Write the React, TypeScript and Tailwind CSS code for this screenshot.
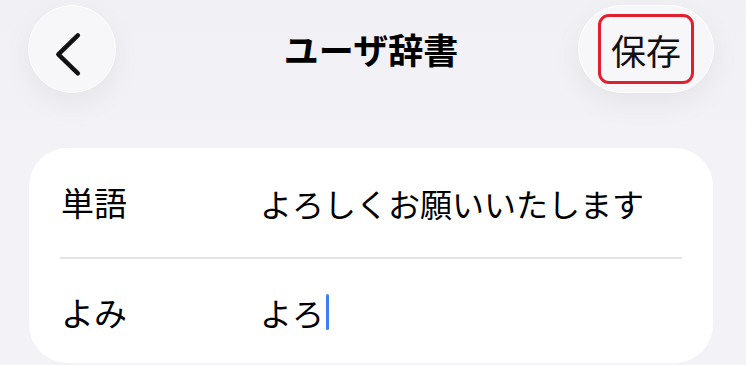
import React from "react";

export default function App() {
  const font = { fontFamily: '"Noto Sans CJK JP", "Noto Sans", sans-serif' };
  return (
    <div
      className="w-[746px] h-[365px] overflow-hidden bg-[#f2f2f7] text-black"
      style={font}
    >
      <div className="h-[148px] bg-gradient-to-b from-[#f1f1f5] to-[#f2f2f7] pt-[5px]">
        <div className="grid grid-cols-[1fr_auto_1fr] items-center pl-[28px] pr-[32px] h-[88px]">
          <div className="flex">
            <button className="w-[88px] h-[88px] rounded-full bg-[#f7f7f9] border border-white shadow-[0_10px_30px_rgba(0,0,0,0.06)] flex items-center justify-center">
              <svg width="88" height="88" viewBox="0 0 88 88">
                <path
                  d="M50 30 L30 49.5 L50 69"
                  fill="none"
                  stroke="#111"
                  strokeWidth="4.5"
                  strokeLinecap="round"
                  strokeLinejoin="round"
                />
              </svg>
            </button>
          </div>
          <div className="text-[35px] font-bold leading-none pb-[2px]">
            ユーザ辞書
          </div>
          <div className="flex justify-end">
            <button className="w-[136px] h-[88px] rounded-full bg-[#f7f7f9] border border-white shadow-[0_10px_30px_rgba(0,0,0,0.06)] flex items-center justify-center">
              <span className="w-[96px] h-[70px] rounded-[11px] border-[3px] border-[#e0202e] flex items-center justify-center text-[35px] leading-none text-[#111]">
                保存
              </span>
            </button>
          </div>
        </div>
      </div>
      <div className="ml-[29px] mr-[33px] rounded-[38px] bg-white h-[215px]">
        <div className="h-[109px] flex items-center pl-[32px] text-[32px] leading-none">
          <span className="w-[199px] text-[33px]">単語</span>
          <span>よろしくお願いいたします</span>
        </div>
        <div className="mx-[31px] h-[2px] bg-[#e4e4e7]" />
        <div className="h-[106px] flex items-center pl-[32px] text-[32px] leading-none">
          <span className="w-[199px] text-[33px]">よみ</span>
          <span>よろ</span>
          <span className="ml-[2px] w-[3px] h-[36px] rounded-full bg-[#3b82f0]" />
        </div>
      </div>
    </div>
  );
}
